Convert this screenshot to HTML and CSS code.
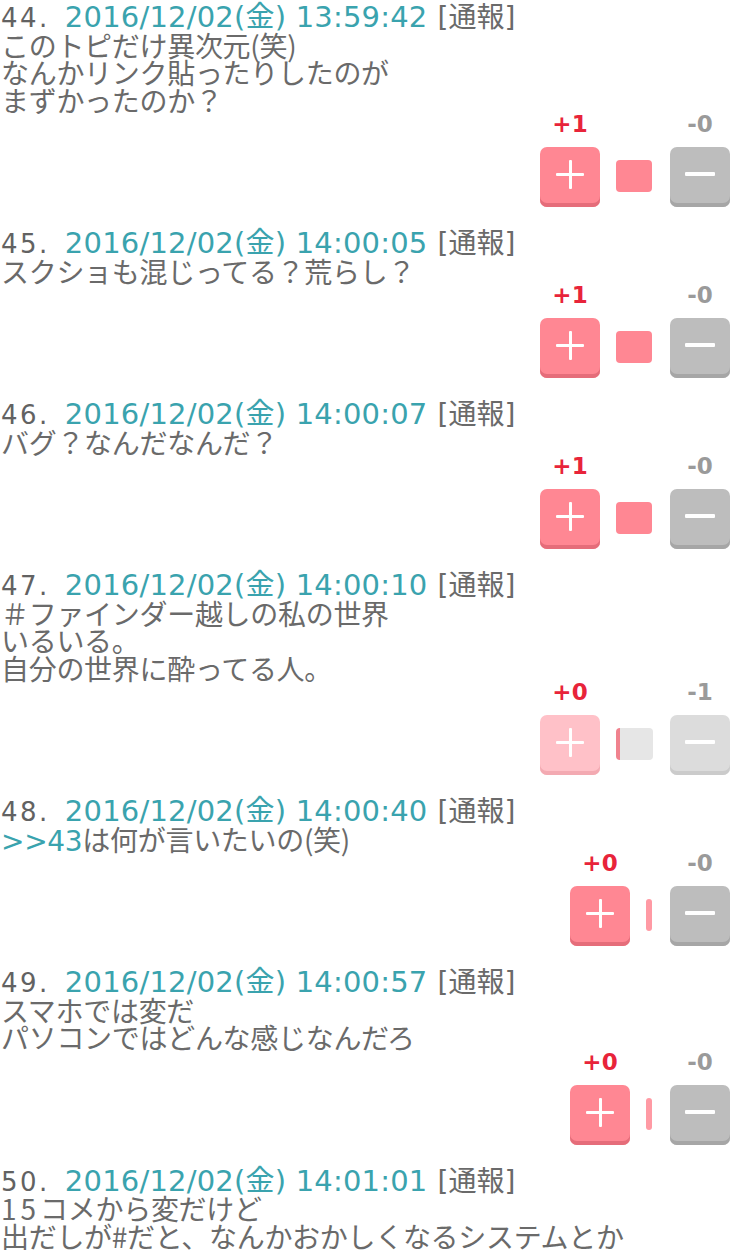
FILE: index.html
```html
<!DOCTYPE html>
<html lang="ja">
<head>
<meta charset="utf-8">
<link rel="stylesheet" href="styles.css">
</head>
<body>
<div class="page">

  <div class="comment">
    <div class="head"><span class="num">44.</span><span class="date">2016/12/02(金) 13:59:42</span><span class="report">[通報]</span></div>
    <div class="line">このトピだけ異次元(笑)</div>
    <div class="line">なんかリンク貼ったりしたのが</div>
    <div class="line">まずかったのか？</div>
    <div class="vote">
      <div class="labels"><span class="pl">+1</span><span class="mi">-0</span></div>
      <div class="btns"><div class="btn plus"></div><div class="bar full"></div><div class="btn minus"></div></div>
    </div>
  </div>

  <div class="comment">
    <div class="head"><span class="num">45.</span><span class="date">2016/12/02(金) 14:00:05</span><span class="report">[通報]</span></div>
    <div class="line">スクショも混じってる？荒らし？</div>
    <div class="vote">
      <div class="labels"><span class="pl">+1</span><span class="mi">-0</span></div>
      <div class="btns"><div class="btn plus"></div><div class="bar full"></div><div class="btn minus"></div></div>
    </div>
  </div>

  <div class="comment">
    <div class="head"><span class="num">46.</span><span class="date">2016/12/02(金) 14:00:07</span><span class="report">[通報]</span></div>
    <div class="line">バグ？なんだなんだ？</div>
    <div class="vote">
      <div class="labels"><span class="pl">+1</span><span class="mi">-0</span></div>
      <div class="btns"><div class="btn plus"></div><div class="bar full"></div><div class="btn minus"></div></div>
    </div>
  </div>

  <div class="comment">
    <div class="head"><span class="num">47.</span><span class="date">2016/12/02(金) 14:00:10</span><span class="report">[通報]</span></div>
    <div class="line">＃ファインダー越しの私の世界</div>
    <div class="line">いるいる。</div>
    <div class="line">自分の世界に酔ってる人。</div>
    <div class="vote faded">
      <div class="labels"><span class="pl">+0</span><span class="mi">-1</span></div>
      <div class="btns"><div class="btn plus"></div><div class="bar track"></div><div class="btn minus"></div></div>
    </div>
  </div>

  <div class="comment">
    <div class="head"><span class="num">48.</span><span class="date">2016/12/02(金) 14:00:40</span><span class="report">[通報]</span></div>
    <div class="line"><span class="anchor">&gt;&gt;43</span>は何が言いたいの(笑)</div>
    <div class="vote">
      <div class="labels"><span class="pl">+0</span><span class="mi">-0</span></div>
      <div class="btns"><div class="btn plus"></div><div class="bar thin"></div><div class="btn minus"></div></div>
    </div>
  </div>

  <div class="comment">
    <div class="head"><span class="num">49.</span><span class="date">2016/12/02(金) 14:00:57</span><span class="report">[通報]</span></div>
    <div class="line">スマホでは変だ</div>
    <div class="line">パソコンではどんな感じなんだろ</div>
    <div class="vote">
      <div class="labels"><span class="pl">+0</span><span class="mi">-0</span></div>
      <div class="btns"><div class="btn plus"></div><div class="bar thin"></div><div class="btn minus"></div></div>
    </div>
  </div>

  <div class="comment">
    <div class="head"><span class="num">50.</span><span class="date">2016/12/02(金) 14:01:01</span><span class="report">[通報]</span></div>
    <div class="line"><span class="digits">15</span>コメから変だけど</div>
    <div class="line">出だしが#だと、なんかおかしくなるシステムとか</div>
  </div>

</div>
</body>
</html>
```

FILE: styles.css
```css
html, body {
  margin: 0;
  padding: 0;
  background: #ffffff;
}

.page {
  padding: 4px 20px 0 1px;
  font-family: "DejaVu Sans", "Noto Sans CJK JP", sans-serif;
  font-size: 28px;
  color: #666666;
  overflow: hidden;
  height: 1246px;
}

.comment {
  padding-bottom: 23px;
}

.head {
  height: 27.5px;
  line-height: 27.5px;
  white-space: nowrap;
}

.num {
  font-size: 26px;
  letter-spacing: 2.5px;
  color: #626262;
}

.date {
  margin-left: 15px;
  font-size: 29px;
  letter-spacing: 0.2px;
  color: #3aa3ae;
}

.report {
  margin-left: 10px;
  color: #6a6a6a;
}

.line {
  height: 27.5px;
  line-height: 27.5px;
  white-space: nowrap;
  font-family: "Noto Sans CJK JP", "DejaVu Sans", sans-serif;
  letter-spacing: -0.3px;
  color: #6a6a6a;
}

.digits {
  letter-spacing: 4px;
}

.anchor {
  font-family: "DejaVu Sans", sans-serif;
  color: #3aa3ae;
}

.vote {
  width: fit-content;
  margin-left: auto;
}

.labels {
  display: flex;
  justify-content: space-between;
  height: 20px;
  line-height: 20px;
  margin-bottom: 13px;
  font-family: "DejaVu Sans", sans-serif;
  font-weight: bold;
  font-size: 23px;
}

.labels span {
  width: 60px;
  text-align: center;
}

.pl {
  color: #e8243a;
}

.mi {
  color: #9a9a9a;
}

.btns {
  display: flex;
  align-items: center;
  height: 60px;
}

.btn {
  position: relative;
  width: 60px;
  height: 60px;
  border-radius: 7px;
  box-sizing: border-box;
}

.plus {
  background: #ff8793;
  box-shadow: inset 0 -4px 0 #e56d7a;
}

.minus {
  background: #bdbdbd;
  box-shadow: inset 0 -4px 0 #a6a6a6;
}

.plus::before,
.plus::after,
.minus::before {
  content: "";
  position: absolute;
  background: #ffffff;
  border-radius: 1px;
}

.plus::before {
  left: 16px;
  top: 26px;
  width: 28px;
  height: 3px;
}

.plus::after {
  left: 28.5px;
  top: 13px;
  width: 3px;
  height: 29px;
}

.minus::before {
  left: 15px;
  top: 25px;
  width: 30px;
  height: 4px;
}

.bar {
  height: 32px;
  margin: 0 16px 2px;
  border-radius: 4px;
  box-sizing: border-box;
}

.bar.full {
  width: 36px;
  margin-right: 18px;
  background: #ff8793;
}

.bar.track {
  width: 37px;
  margin-right: 17px;
  background: #e6e6e6;
  border-left: 4px solid #f0828e;
}

.bar.thin {
  width: 6px;
  margin-left: 16px;
  margin-right: 18px;
  background: #ff9aa4;
  border-radius: 3px;
}

.faded .plus {
  background: #ffc1c8;
  box-shadow: inset 0 -4px 0 #f3aab2;
}

.faded .minus {
  background: #dcdcdc;
  box-shadow: inset 0 -4px 0 #cbcbcb;
}
```
